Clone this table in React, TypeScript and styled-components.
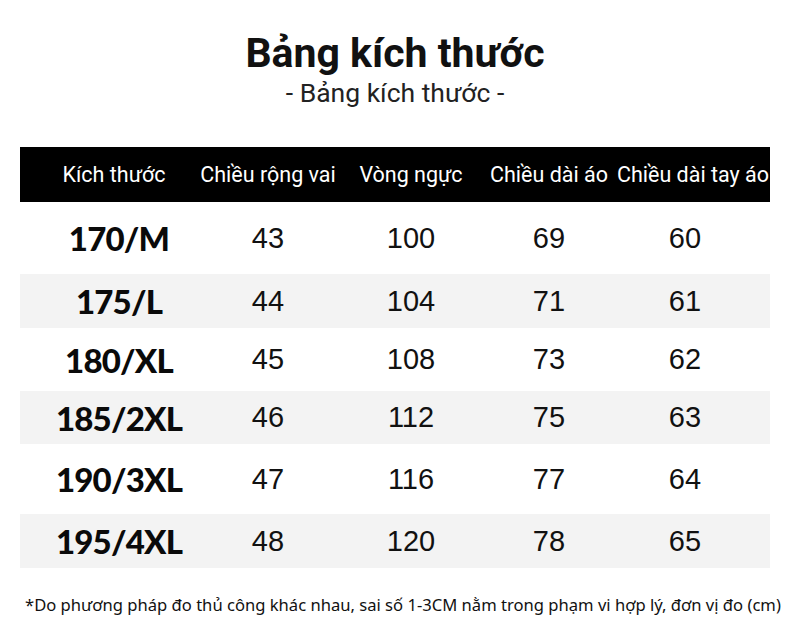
import React from 'react';
import styled, { createGlobalStyle } from 'styled-components';

const GlobalStyle = createGlobalStyle`
  html, body {
    margin: 0;
    padding: 0;
    background: #ffffff;
  }
`;

const Page = styled.div`
  width: 790px;
  height: 617px;
  padding: 29px 20px 0;
  box-sizing: border-box;
  display: flex;
  flex-direction: column;
  align-items: stretch;
`;

const Title = styled.h1`
  margin: 0;
  text-align: center;
  font-family: Roboto, "Liberation Sans", sans-serif;
  font-weight: 700;
  font-size: 41px;
  line-height: 48px;
  color: #111;
`;

const Subtitle = styled.div`
  text-align: center;
  font-family: Roboto, "Liberation Sans", sans-serif;
  font-size: 26.5px;
  line-height: 32px;
  color: #222;
  margin-bottom: 38px;
`;

const Table = styled.div`
  display: flex;
  flex-direction: column;
`;

const columns = '192px 112px 174px 102px 170px';

const HeaderRow = styled.div`
  display: grid;
  grid-template-columns: ${columns};
  height: 55px;
  align-items: center;
  background: #000;
`;

const HeaderCell = styled.div<{ $shift?: number }>`
  justify-self: center;
  white-space: nowrap;
  font-family: Roboto, "Liberation Sans", sans-serif;
  font-size: 21.5px;
  color: #fff;
  transform: translateX(${(p) => p.$shift ?? 0}px);
`;

const Row = styled.div<{ $shade: boolean; $height: number }>`
  display: grid;
  grid-template-columns: ${columns};
  height: ${(p) => p.$height}px;
  align-items: center;
  background: ${(p) => (p.$shade ? '#f3f3f3' : '#ffffff')};
`;

const SizeCell = styled.div`
  justify-self: center;
  white-space: nowrap;
  font-family: Lato, "DejaVu Sans", sans-serif;
  font-weight: 900;
  font-size: 33px;
  letter-spacing: -0.8px;
  color: #0a0a0a;
  transform: translateX(3px);
`;

const ValueCell = styled.div`
  justify-self: center;
  font-family: "Liberation Sans", Arial, sans-serif;
  font-size: 29px;
  color: #111;
`;

const Note = styled.div`
  margin-top: 26px;
  margin-left: 5px;
  white-space: nowrap;
  font-family: "Noto Sans", "Open Sans", sans-serif;
  font-size: 16.6px;
  line-height: 22px;
  color: #111;
`;

const headers = ['Kích thước', 'Chiều rộng vai', 'Vòng ngực', 'Chiều dài áo', 'Chiều dài tay áo'];
const headerShift = [-2, 0, 0, 0, 8];

const rows = [
  { size: '170/M', values: [43, 100, 69, 60], height: 72 },
  { size: '175/L', values: [44, 104, 71, 61], height: 54 },
  { size: '180/XL', values: [45, 108, 73, 62], height: 63 },
  { size: '185/2XL', values: [46, 112, 75, 63], height: 53 },
  { size: '190/3XL', values: [47, 116, 77, 64], height: 70 },
  { size: '195/4XL', values: [48, 120, 78, 65], height: 54 },
];

export default function App() {
  return (
    <>
      <GlobalStyle />
      <Page>
        <Title>Bảng kích thước</Title>
        <Subtitle>- Bảng kích thước -</Subtitle>
        <Table>
          <HeaderRow>
            {headers.map((h, i) => (
              <HeaderCell key={h} $shift={headerShift[i]}>
                {h}
              </HeaderCell>
            ))}
          </HeaderRow>
          {rows.map((r, i) => (
            <Row key={r.size} $shade={i % 2 === 1} $height={r.height}>
              <SizeCell>{r.size}</SizeCell>
              {r.values.map((v, j) => (
                <ValueCell key={j}>{v}</ValueCell>
              ))}
            </Row>
          ))}
        </Table>
        <Note>
          *Do phương pháp đo thủ công khác nhau, sai số 1-3CM nằm trong phạm vi hợp lý, đơn vị đo (cm)
        </Note>
      </Page>
    </>
  );
}
